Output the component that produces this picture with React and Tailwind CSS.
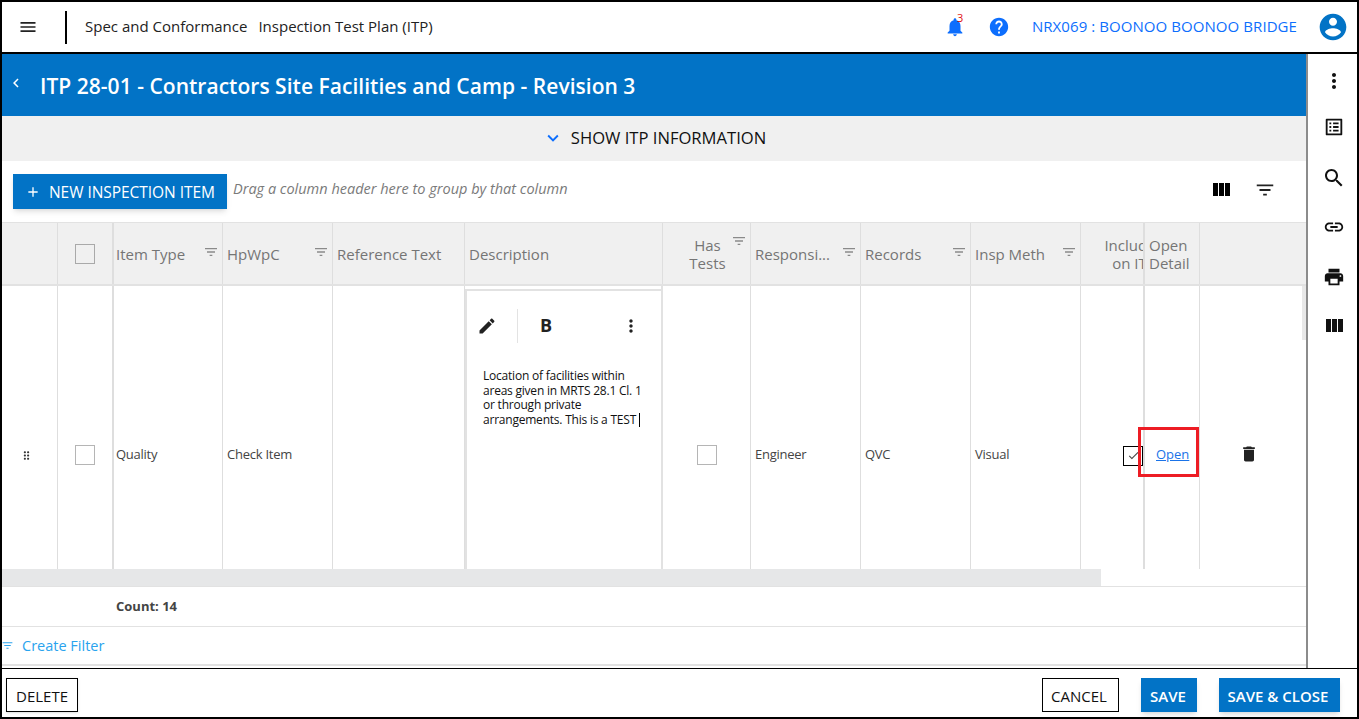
import React from 'react';

const ICONS = {
    menu: 'M3 18h18v-2H3v2zm0-5h18v-2H3v2zm0-7v2h18V6H3z',
    bell: 'M12 22c1.1 0 2-.9 2-2h-4c0 1.1.89 2 2 2zm6-6v-5c0-3.07-1.64-5.64-4.5-6.32V4c0-.83-.67-1.5-1.5-1.5s-1.5.67-1.5 1.5v.68C7.63 5.36 6 7.92 6 11v5l-2 2v1h16v-1l-2-2z',
    help: 'M12 2C6.48 2 2 6.48 2 12s4.48 10 10 10 10-4.48 10-10S17.52 2 12 2zm1 17h-2v-2h2v2zm2.07-7.75l-.9.92C13.45 12.9 13 13.5 13 15h-2v-.5c0-1.1.45-2.1 1.17-2.83l1.24-1.26c.37-.36.59-.86.59-1.41 0-1.1-.9-2-2-2s-2 .9-2 2H8c0-2.21 1.79-4 4-4s4 1.79 4 4c0 .88-.36 1.68-.93 2.25z',
    account: 'M12 2C6.48 2 2 6.48 2 12s4.48 10 10 10 10-4.48 10-10S17.52 2 12 2zm0 3c1.66 0 3 1.34 3 3s-1.34 3-3 3-3-1.34-3-3 1.34-3 3-3zm0 14.2c-2.5 0-4.71-1.28-6-3.22.03-1.99 4-3.08 6-3.08 1.99 0 5.97 1.09 6 3.08-1.29 1.94-3.5 3.22-6 3.22z',
    more: 'M12 8c1.1 0 2-.9 2-2s-.9-2-2-2-2 .9-2 2 .9 2 2 2zm0 2c-1.1 0-2 .9-2 2s.9 2 2 2 2-.9 2-2-.9-2-2-2zm0 6c-1.1 0-2 .9-2 2s.9 2 2 2 2-.9 2-2-.9-2-2-2z',
    list: 'M19 5v14H5V5h14m1.1-2H3.9c-.5 0-.9.4-.9.9v16.2c0 .4.4.9.9.9h16.2c.4 0 .9-.5.9-.9V3.9c0-.5-.5-.9-.9-.9zM11 7h6v2h-6V7zm0 4h6v2h-6v-2zm0 4h6v2h-6zM7 7h2v2H7zm0 4h2v2H7zm0 4h2v2H7z',
    search: 'M15.5 14h-.79l-.28-.27C15.41 12.59 16 11.11 16 9.5 16 5.91 13.09 3 9.5 3S3 5.91 3 9.5 5.91 16 9.5 16c1.61 0 3.09-.59 4.23-1.57l.27.28v.79l5 4.99L20.49 19l-4.99-5zm-6 0C7.01 14 5 11.99 5 9.5S7.01 5 9.5 5 14 7.01 14 9.5 11.99 14 9.5 14z',
    link: 'M3.9 12c0-1.71 1.39-3.1 3.1-3.1h4V7H7c-2.76 0-5 2.24-5 5s2.24 5 5 5h4v-1.9H7c-1.71 0-3.1-1.39-3.1-3.1zM8 13h8v-2H8v2zm9-6h-4v1.9h4c1.71 0 3.1 1.39 3.1 3.1s-1.39 3.1-3.1 3.1h-4V17h4c2.76 0 5-2.24 5-5s-2.24-5-5-5z',
    print: 'M19 8H5c-1.66 0-3 1.34-3 3v6h4v4h12v-4h4v-6c0-1.66-1.34-3-3-3zm-3 11H8v-5h8v5zm3-7c-.55 0-1-.45-1-1s.45-1 1-1 1 .45 1 1-.45 1-1 1zm-1-9H6v4h12V3z',
    columns: 'M10 18h5V5h-5v13zm-6 0h5V5H4v13zM16 5v13h5V5h-5z',
    filter: 'M10 18h4v-2h-4v2zM3 6v2h18V6H3zm3 7h12v-2H6v2z',
    edit: 'M3 17.25V21h3.75L17.81 9.94l-3.75-3.75L3 17.25zM20.71 7.04c.39-.39.39-1.02 0-1.41l-2.34-2.34c-.39-.39-1.02-.39-1.41 0l-1.83 1.83 3.75 3.75 1.83-1.83z',
    trash: 'M6 19c0 1.1.9 2 2 2h8c1.1 0 2-.9 2-2V7H6v12zM19 4h-3.5l-1-1h-5l-1 1H5v2h14V4z',
    drag: 'M11 18c0 1.1-.9 2-2 2s-2-.9-2-2 .9-2 2-2 2 .9 2 2zm-2-8c-1.1 0-2 .9-2 2s.9 2 2 2 2-.9 2-2-.9-2-2-2zm0-6c-1.1 0-2 .9-2 2s.9 2 2 2 2-.9 2-2-.9-2-2-2zm6 4c1.1 0 2-.9 2-2s-.9-2-2-2-2 .9-2 2 .9 2 2 2zm0 2c-1.1 0-2 .9-2 2s.9 2 2 2 2-.9 2-2-.9-2-2-2zm0 6c-1.1 0-2 .9-2 2s.9 2 2 2 2-.9 2-2-.9-2-2-2z',
    plus: 'M19 13h-6v6h-2v-6H5v-2h6V5h2v6h6v2z',
    down: 'M7.41 8.59 12 13.17l4.59-4.58L18 10l-6 6-6-6z',
    back: 'M15.41 7.41 14 6l-6 6 6 6 1.41-1.41L10.83 12z',
    check: 'M9 16.17 4.83 12l-1.42 1.41L9 19 21 7l-1.41-1.41z',
};

function Icon({ name, className }) {
    return (
        <svg viewBox="0 0 24 24" fill="currentColor" className={className}>
            <path d={ICONS[name]} />
        </svg>
    );
}

// column widths measured off the grid lines
const COLS = 'grid grid-cols-[56px_56px_109px_110px_132px_198px_88px_110px_110px_110px_64px_55px_1fr]';

function HeaderCell({ label, filter = true, pad = 'pl-[4px]' }) {
    return (
        <div className={`flex items-center justify-between pr-[2px] border-r border-[#dedede] ${pad}`}>
            <span className="whitespace-nowrap">{label}</span>
            {filter && <Icon name="filter" className="w-[16px] h-[16px] text-[#8a8a8a] mb-[4px] mr-[1px] shrink-0" />}
        </div>
    );
}

function BodyCell({ children, className = '' }) {
    return <div className={`flex items-center border-r border-[#dedede] pt-[56px] pb-[1px] ${className}`}>{children}</div>;
}

function TableHeader() {
    return (
        <div className={`${COLS} h-[64px] shrink-0 bg-[#f0f0f0] border-t border-b-2 border-[#e2e2e2] text-[15px] leading-[18px] text-[#757575]`}>
            <div className="border-r border-[#dedede]" />
            <div className="flex items-center justify-center border-r-2 border-[#dedede] pr-[1px]">
                <div className="w-[20px] h-[20px] border border-[#a9a9a9] bg-[#f0f0f0]" />
            </div>
            <HeaderCell label="Item Type" pad="pl-[2px]" />
            <HeaderCell label="HpWpC" />
            <HeaderCell label="Reference Text" filter={false} />
            <HeaderCell label="Description" filter={false} />
            <div className="flex items-start justify-between pt-[13px] pr-[2px] border-r border-[#dedede]">
                <span className="w-[88px] -mr-[16px] pl-[5px] text-center">Has<br />Tests</span>
                <Icon name="filter" className="w-[16px] h-[16px] text-[#8a8a8a] shrink-0 -mt-[3px] mr-[1px]" />
            </div>
            <HeaderCell label="Responsi..." />
            <HeaderCell label="Records" />
            <HeaderCell label="Insp Meth" />
            <div className="overflow-hidden border-r-2 border-[#dedede] pt-[13px] pl-[19px]">
                <div className="w-[60px] text-center">Include</div>
                <div className="w-[60px] pl-[8px] text-center">on ITP</div>
            </div>
            <div className="pt-[13px] pl-[4px] border-r border-[#dedede]">Open<br />Detail</div>
            <div />
        </div>
    );
}

function DescriptionEditor() {
    return (
        <div className="flex flex-col border-r-2 border-[#e2e2e2] pt-[3px]">
            <div className="flex-1 border-t-2 border-l-2 border-[#e2e2e2]">
                <div className="flex items-center h-[34px] mt-[18px] pl-[10px] text-[#222]">
                    <Icon name="edit" className="w-[20px] h-[20px]" />
                    <div className="w-px h-[34px] bg-[#e3e3e3] ml-[20px]" />
                    <span className="ml-[22px] w-[15px] font-bold text-[18px] leading-[18px] mb-[2px]">B</span>
                    <Icon name="more" className="w-[20px] h-[20px] ml-[66px]" />
                </div>
                <div className="mt-[26px] pl-[16px] text-[12px] leading-[14.6px] text-[#111] tracking-[-0.22px] whitespace-nowrap">
                    <div>Location of facilities within</div>
                    <div>areas given in MRTS 28.1 Cl. 1</div>
                    <div>or through private</div>
                    <div className="flex items-center">arrangements. This is a TEST<span className="inline-block w-px h-[14px] bg-black ml-[3px]" /></div>
                </div>
            </div>
        </div>
    );
}

function TableRow() {
    return (
        <div className={`${COLS} h-[283px] shrink-0 text-[13px] text-[#444] tracking-[-0.25px]`}>
            <BodyCell className="justify-center pr-[6px]"><Icon name="drag" className="w-[13px] h-[13px] text-[#333]" /></BodyCell>
            <div className="flex items-center justify-center border-r-2 border-[#dedede] pr-[1px] pt-[55px]">
                <div className="w-[20px] h-[20px] border border-[#b5b5b5]" />
            </div>
            <BodyCell className="pl-[2px]">Quality</BodyCell>
            <BodyCell className="pl-[4px]">Check Item</BodyCell>
            <BodyCell />
            <DescriptionEditor />
            <BodyCell className="justify-center"><div className="w-[20px] h-[20px] border border-[#b5b5b5]" /></BodyCell>
            <BodyCell className="pl-[4px]">Engineer</BodyCell>
            <BodyCell className="pl-[4px]">QVC</BodyCell>
            <BodyCell className="pl-[4px]">Visual</BodyCell>
            <div className="flex items-center justify-end border-r-2 border-[#dedede] pt-[57px]">
                <div className="flex items-center justify-center w-[20px] h-[20px] mb-[1px] border border-black">
                    <Icon name="check" className="w-[13px] h-[13px] text-[#444]" />
                </div>
            </div>
            <BodyCell className="pl-[11px]">
                <span className="text-[13px] tracking-normal text-[#1a73e8] underline">Open</span>
            </BodyCell>
            <div className="flex items-center pl-[39px] pt-[55px] pb-[3px]"><Icon name="trash" className="w-[20px] h-[20px] text-[#222]" /></div>
        </div>
    );
}

const SIDE_ICONS = [
    ['more', 'w-[24px] h-[24px] mt-[15px]'],
    ['list', 'w-[22px] h-[22px] mt-[23px]'],
    ['search', 'w-[24px] h-[24px] mt-[28px]'],
    ['link', 'w-[22px] h-[22px] mt-[26px]'],
    ['print', 'w-[22px] h-[22px] mt-[28px]'],
    ['columns', 'w-[24px] h-[24px] mt-[26px]'],
];

export default function App() {
    return (
        <div className="relative w-[1359px] h-[719px] overflow-hidden flex flex-col bg-white border-2 border-black font-['Open_Sans','Noto_Sans',sans-serif]">
            <header className="flex items-center h-[50px] shrink-0 border-b-2 border-black box-content pr-[8px]">
                <Icon name="menu" className="w-[20px] h-[20px] ml-[16px] text-[#222]" />
                <div className="w-[2px] h-[33px] bg-black ml-[27px]" />
                <span className="ml-[18px] mb-[2px] text-[15px] text-[#222]">Spec and Conformance</span>
                <span className="ml-[11px] mb-[2px] text-[15px] text-[#222]">Inspection Test Plan (ITP)</span>
                <div className="flex-1" />
                <div className="relative">
                    <Icon name="bell" className="w-[22px] h-[22px] text-[#0d6efd]" />
                    <span className="absolute -top-[5px] left-[13px] text-[11px] leading-[14px] text-[#e01010]">3</span>
                </div>
                <Icon name="help" className="w-[22px] h-[22px] ml-[22px] text-[#0d6efd]" />
                <span className="ml-[22px] mb-[2px] text-[15px] text-[#0d6efd] tracking-[0.07px]">NRX069 : BOONOO BOONOO BRIDGE</span>
                <Icon name="account" className="w-[32px] h-[32px] ml-[20px] text-[#0273c6]" />
            </header>

            <div className="flex-1 min-h-0 flex">
                <main className="flex-1 min-w-0 flex flex-col">
                    <div className="flex items-center h-[62px] shrink-0 bg-[#0273c6] text-white">
                        <Icon name="back" className="w-[18px] h-[18px] ml-[5px] mb-[4px]" />
                        <h1 className="ml-[15px] mt-[3px] text-[21px] font-semibold tracking-[0.03px]">ITP 28-01 - Contractors Site Facilities and Camp - Revision 3</h1>
                    </div>
                    <div className="flex items-center justify-center h-[45px] shrink-0 bg-[#f0f0f0]">
                        <Icon name="down" className="w-[22px] h-[22px] text-[#0d6efd] mr-[7px] mb-[2px]" />
                        <span className="text-[16.6px] font-medium text-[#111]">SHOW ITP INFORMATION</span>
                    </div>
                    <div className="flex items-start h-[61px] shrink-0">
                        <button className="flex items-center h-[35px] mt-[13px] ml-[11px] w-[214px] bg-[#0273c6] text-white shadow-md">
                            <Icon name="plus" className="w-[16px] h-[16px] ml-[12px]" />
                            <span className="ml-[8px] mt-[2px] text-[15.5px] font-medium tracking-[-0.05px]">NEW INSPECTION ITEM</span>
                        </button>
                        <span className="ml-[6px] mt-[17px] text-[14.5px] italic font-medium text-[#7a7a7a]">Drag a column header here to group by that column</span>
                        <div className="flex-1" />
                        <Icon name="columns" className="w-[24px] h-[24px] mt-[17px] text-black" />
                        <Icon name="filter" className="w-[22px] h-[22px] mt-[18px] ml-[21px] mr-[30px] text-[#222]" />
                    </div>
                    <TableHeader />
                    <div className="relative">
                        <TableRow />
                        <div className="absolute right-0 top-0 w-[4px] h-[54px] bg-[#e8e8e8]" />
                    </div>
                    <div className="h-[18px] shrink-0 border-b border-[#e2e2e2]">
                        <div className="h-full w-[1099px] bg-[#e6e7e8]" />
                    </div>
                    <div className="flex items-center h-[40px] pt-[1px] shrink-0 border-b border-[#e2e2e2] pl-[114px] text-[13px] font-bold text-[#444]">Count: 14</div>
                    <div className="flex items-center h-[39px] pt-[1px] shrink-0 border-b-2 border-[#e2e2e2] text-[14.5px] text-[#29a3ee]">
                        <Icon name="filter" className="w-[13px] h-[13px] mb-[2px] -ml-[1px]" />
                        <span className="ml-[8px]">Create Filter</span>
                    </div>
                </main>
                <aside className="w-[51px] shrink-0 flex flex-col items-center border-l-2 border-[#8c8c8c] pl-[3px] text-[#111]">
                    {SIDE_ICONS.map(([name, cls]) => <Icon key={name} name={name} className={cls} />)}
                </aside>
            </div>

            <footer className="flex items-center h-[48px] shrink-0 border-t border-black box-content text-[15px] font-medium">
                <button className="ml-[4px] w-[72px] h-[34px] mt-[3px] pt-[3px] border border-black text-[#111] shadow-sm">DELETE</button>
                <div className="flex-1" />
                <button className="w-[77px] h-[34px] mt-[3px] pt-[3px] pr-[3px] border border-black text-[#111]">CANCEL</button>
                <button className="ml-[22px] w-[56px] h-[34px] mt-[3px] pt-[3px] pr-[2px] bg-[#0273c6] text-white font-semibold shadow-md">SAVE</button>
                <button className="ml-[22px] mr-[17px] w-[121px] h-[34px] mt-[3px] pt-[3px] pr-[3px] bg-[#0273c6] text-white font-semibold shadow-md">SAVE &amp; CLOSE</button>
            </footer>

            <div className="absolute left-[1136px] top-[425px] w-[61px] h-[50px] border-[3px] border-[#ed1c24]" />
        </div>
    );
}
